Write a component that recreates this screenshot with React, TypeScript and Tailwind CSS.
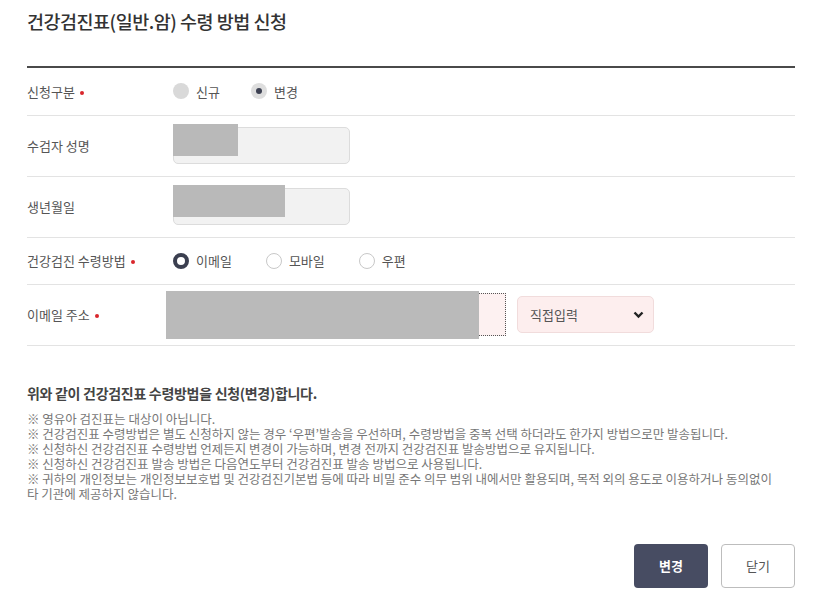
import React from 'react'

const font = { fontFamily: '"Noto Sans CJK KR", "Noto Sans", sans-serif' }

const Req = () => (
  <span className="ml-[5px] inline-block h-[4px] w-[4px] rounded-full bg-[#d9262c] align-middle" />
)

const Row = ({
  label,
  required,
  h,
  children,
}: {
  label: string
  required?: boolean
  h: string
  children: React.ReactNode
}) => (
  <div className={`flex items-center border-b border-[#e3e3e3] ${h}`}>
    <div className="w-[146px] shrink-0 text-[13px] text-[#555]">
      {label}
      {required && <Req />}
    </div>
    <div className="flex flex-1 items-center">{children}</div>
  </div>
)

const Radio = ({
  label,
  state,
}: {
  label: string
  state: 'off' | 'disabled' | 'checkedDisabled' | 'checked'
}) => {
  let dot = null
  if (state === 'disabled')
    dot = <span className="h-[16px] w-[16px] rounded-full bg-[#d9d9d9]" />
  else if (state === 'checkedDisabled')
    dot = (
      <span className="flex h-[16px] w-[16px] items-center justify-center rounded-full bg-[#dedede]">
        <span className="h-[6px] w-[6px] rounded-full bg-[#3d4152]" />
      </span>
    )
  else if (state === 'checked')
    dot = (
      <span className="h-[16px] w-[16px] rounded-full border-[4px] border-[#3b3f50] bg-white" />
    )
  else
    dot = (
      <span className="h-[16px] w-[16px] rounded-full border border-[#c8c8c8] bg-white" />
    )
  return (
    <div className="flex items-center gap-[7px] text-[13px] text-[#555]">
      {dot}
      <span>{label}</span>
    </div>
  )
}

const Input = ({ redact }: { redact: string }) => (
  <div className="relative h-[37px] w-[177px] rounded-[5px] border border-[#dcdcdc] bg-[#f2f2f2]">
    <div className={`absolute left-[-1px] top-[-4px] h-[32px] bg-[#b9b9b9] ${redact}`} />
  </div>
)

export default function App() {
  return (
    <div className="min-h-[604px] w-[822px] bg-white px-[27px] pt-[8px]" style={font}>
      <h1 className="text-[18.5px] font-medium tracking-[-0.5px] text-[#333]">
        건강검진표(일반.암) 수령 방법 신청
      </h1>

      <div className="mt-[30px] w-[768px] border-t-[2px] border-[#4a4a4a]">
        <Row label="신청구분" required h="h-[48px]">
          <div className="flex items-center gap-[31px]">
            <Radio label="신규" state="disabled" />
            <Radio label="변경" state="checkedDisabled" />
          </div>
        </Row>
        <Row label="수검자 성명" h="h-[61px]">
          <Input redact="w-[65px]" />
        </Row>
        <Row label="생년월일" h="h-[61px]">
          <Input redact="w-[112px]" />
        </Row>
        <Row label="건강검진 수령방법" required h="h-[47px]">
          <div className="flex items-center gap-[34px]">
            <Radio label="이메일" state="checked" />
            <Radio label="모바일" state="off" />
            <Radio label="우편" state="off" />
          </div>
        </Row>
        <Row label="이메일 주소" required h="h-[61px]">
          <div className="ml-[-7px] flex items-center">
            <div className="h-[48px] w-[313px] bg-[#bababa]" />
            <div className="h-[43px] w-[27px] border border-l-0 border-dotted border-[#555] bg-[#fdf1f1]" />
            <div className="ml-[11px] flex h-[37px] w-[137px] items-center justify-between rounded-[5px] border border-[#f1dcdc] bg-[#fdeeee] pl-[12px] pr-[9px] text-[13px] text-[#555]">
              <span>직접입력</span>
              <svg width="11" height="8" viewBox="0 0 11 8">
                <path d="M1.5 1.5 L5.5 5.5 L9.5 1.5" fill="none" stroke="#222" strokeWidth="2.4" />
              </svg>
            </div>
          </div>
        </Row>
      </div>

      <p className="mt-[37px] text-[14px] font-bold tracking-[-0.3px] text-[#444]">
        위와 같이 건강검진표 수령방법을 신청(변경)합니다.
      </p>
      <div className="mt-[7px] text-[12.5px] leading-[15px] text-[#777]">
        <p>※ 영유아 검진표는 대상이 아닙니다.</p>
        <p>
          ※ 건강검진표 수령방법은 별도 신청하지 않는 경우 ‘우편’발송을 우선하며, 수령방법을 중복 선택 하더라도 한가지 방법으로만 발송됩니다.
        </p>
        <p>※ 신청하신 건강검진표 수령방법 언제든지 변경이 가능하며, 변경 전까지 건강검진표 발송방법으로 유지됩니다.</p>
        <p>※ 신청하신 건강검진표 발송 방법은 다음연도부터 건강검진표 발송 방법으로 사용됩니다.</p>
        <p>
          ※ 귀하의 개인정보는 개인정보보호법 및 건강검진기본법 등에 따라 비밀 준수 의무 범위 내에서만 활용되며, 목적 외의 용도로 이용하거나 동의없이
          <br />
          타 기관에 제공하지 않습니다.
        </p>
      </div>

      <div className="mt-[43px] flex w-[768px] justify-end gap-[13px]">
        <button className="h-[44px] w-[74px] rounded-[4px] bg-[#474c62] text-[13px] font-bold text-white">
          변경
        </button>
        <button className="h-[44px] w-[74px] rounded-[4px] border border-[#bdbdbd] bg-white text-[13px] text-[#555]">
          닫기
        </button>
      </div>
    </div>
  )
}
